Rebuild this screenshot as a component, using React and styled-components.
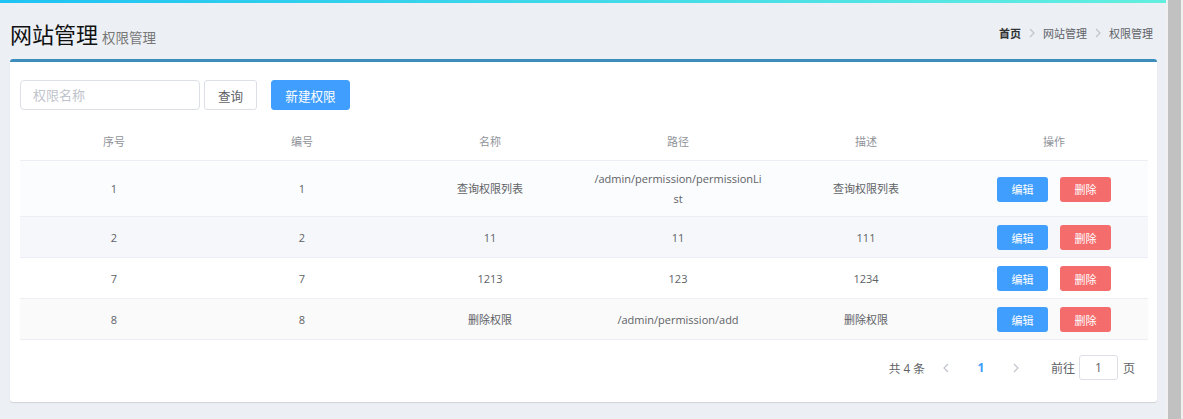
import styled, { createGlobalStyle } from "styled-components";

const rows = [
    { no: 1, id: 1, name: "查询权限列表", path: "/admin/permission/permissionList", desc: "查询权限列表", bg: "#fbfcfe" },
    { no: 2, id: 2, name: "11", path: "11", desc: "111", bg: "#f5f7fa" },
    { no: 7, id: 7, name: "1213", path: "123", desc: "1234", bg: "#fff" },
    { no: 8, id: 8, name: "删除权限", path: "/admin/permission/add", desc: "删除权限", bg: "#fafafa" },
];

const Chevron = ({ dir = "right", color = "#c0c4cc", w = 6, h = 10 }) => (
    <svg width={w} height={h} viewBox="0 0 6 10" fill="none">
        {dir === "right" ? (
            <polyline points="1,1 5,5 1,9" stroke={color} strokeWidth="1.2" />
        ) : (
            <polyline points="5,1 1,5 5,9" stroke={color} strokeWidth="1.2" />
        )}
    </svg>
);

export default function App() {
    return (
        <PageSC>
            <GlobalStyle />
            <MainSC>
                <StripeSC />
                <HeaderSC>
                    <TitleSC>
                        网站管理<SmallSC>权限管理</SmallSC>
                    </TitleSC>
                    <CrumbsSC>
                        <CrumbSC $strong>首页</CrumbSC>
                        <SepSC><Chevron /></SepSC>
                        <CrumbSC>网站管理</CrumbSC>
                        <SepSC><Chevron /></SepSC>
                        <CrumbSC>权限管理</CrumbSC>
                    </CrumbsSC>
                </HeaderSC>
                <BoxSC>
                    <ToolbarSC>
                        <InputSC placeholder="权限名称" />
                        <ButtonSC>查询</ButtonSC>
                        <ButtonSC $primary $wide>新建权限</ButtonSC>
                    </ToolbarSC>
                    <TableSC>
                        <thead>
                            <tr>
                                <ThSC>序号</ThSC>
                                <ThSC>编号</ThSC>
                                <ThSC>名称</ThSC>
                                <ThSC>路径</ThSC>
                                <ThSC>描述</ThSC>
                                <ThSC>操作</ThSC>
                            </tr>
                        </thead>
                        <tbody>
                            {rows.map((r) => (
                                <TrSC key={r.no} $bg={r.bg}>
                                    <TdSC>{r.no}</TdSC>
                                    <TdSC>{r.id}</TdSC>
                                    <TdSC>{r.name}</TdSC>
                                    <TdSC>{r.path}</TdSC>
                                    <TdSC>{r.desc}</TdSC>
                                    <TdSC>
                                        <OpsSC>
                                            <SmallBtnSC $color="#409eff">编辑</SmallBtnSC>
                                            <SmallBtnSC $color="#f56c6c">删除</SmallBtnSC>
                                        </OpsSC>
                                    </TdSC>
                                </TrSC>
                            ))}
                        </tbody>
                    </TableSC>
                    <PagerSC>
                        <TotalSC>共 4 条</TotalSC>
                        <PageBtnSC><Chevron dir="left" w={6} h={10} /></PageBtnSC>
                        <PageBtnSC $active>1</PageBtnSC>
                        <PageBtnSC><Chevron w={6} h={10} /></PageBtnSC>
                        <JumpSC>
                            前往
                            <JumpInputSC defaultValue="1" />
                            页
                        </JumpSC>
                    </PagerSC>
                </BoxSC>
            </MainSC>
            <ScrollTrackSC>
                <ScrollThumbSC />
            </ScrollTrackSC>
        </PageSC>
    );
}

const GlobalStyle = createGlobalStyle`
    body {
        margin: 0;
        background: #ecf0f5;
        overflow: hidden;
        font-family: "Open Sans", "Noto Sans CJK SC", sans-serif;
    }
`;

const PageSC = styled.div`
    display: flex;
    width: 1183px;
    height: 419px;
    background: #ecf0f5;
`;

const MainSC = styled.div`
    flex: 1;
    display: flex;
    flex-direction: column;
`;

const StripeSC = styled.div`
    height: 3px;
    background: linear-gradient(to right, #1fc3f3, #62efdf);
`;

const HeaderSC = styled.div`
    height: 56px;
    box-sizing: border-box;
    padding: 3px 13px 0 10px;
    display: flex;
    align-items: center;
    justify-content: space-between;
`;

const TitleSC = styled.h1`
    margin: 0;
    font-size: 22px;
    font-weight: 400;
    color: #111;
    display: flex;
    align-items: baseline;
`;

const SmallSC = styled.small`
    font-size: 13.5px;
    color: #777;
    padding-left: 4px;
`;

const CrumbsSC = styled.div`
    display: flex;
    align-items: center;
    font-size: 11px;
`;

const CrumbSC = styled.span`
    color: ${(p) => (p.$strong ? "#303133" : "#606266")};
    font-weight: ${(p) => (p.$strong ? 700 : 400)};
`;

const SepSC = styled.span`
    display: flex;
    margin: 0 8px;
`;

const BoxSC = styled.div`
    margin: 0 9px 0 10px;
    background: #fff;
    border-top: 3px solid #3c8dbc;
    border-radius: 3px;
    box-shadow: 0 1px 1px rgba(0, 0, 0, 0.12);
    padding: 18px 9px 22px 10px;
`;

const ToolbarSC = styled.div`
    display: flex;
    align-items: center;
    height: 30px;
    margin-bottom: 10px;
`;

const InputSC = styled.input`
    width: 180px;
    height: 30px;
    box-sizing: border-box;
    border: 1px solid #dcdfe6;
    border-radius: 4px;
    padding: 0 12px;
    font-family: inherit;
    font-size: 13px;
    color: #606266;
    outline: none;
    &::placeholder {
        color: #c0c4cc;
    }
`;

const ButtonSC = styled.button`
    height: 30px;
    width: ${(p) => (p.$wide ? "79px" : "53px")};
    margin-left: ${(p) => (p.$primary ? "14px" : "4px")};
    box-sizing: border-box;
    border: 1px solid ${(p) => (p.$primary ? "#409eff" : "#dcdfe6")};
    background: ${(p) => (p.$primary ? "#409eff" : "#fff")};
    color: ${(p) => (p.$primary ? "#fff" : "#606266")};
    border-radius: 3px;
    font-family: inherit;
    font-size: 12.6px;
    padding: 0;
`;

const TableSC = styled.table`
    width: 100%;
    table-layout: fixed;
    border-collapse: collapse;
    font-size: 11px;
`;

const ThSC = styled.th`
    padding: 12px 9px 8px;
    line-height: 20px;
    font-weight: 400;
    color: #909399;
    text-align: center;
    border-bottom: 1px solid #ebeef5;
`;

const TrSC = styled.tr`
    background: ${(p) => p.$bg};
`;

const TdSC = styled.td`
    padding: 8px 9px 7px;
    line-height: 20px;
    color: #606266;
    text-align: center;
    vertical-align: middle;
    word-break: break-all;
    border-bottom: 1px solid #ebeef5;
`;

const OpsSC = styled.div`
    display: flex;
    justify-content: center;
    gap: 12px;
`;

const SmallBtnSC = styled.button`
    width: 51px;
    height: 25px;
    border: none;
    border-radius: 3px;
    background: ${(p) => p.$color};
    color: #fff;
    font-family: inherit;
    font-size: 11px;
    padding: 0;
`;

const PagerSC = styled.div`
    display: flex;
    justify-content: flex-end;
    align-items: center;
    height: 25px;
    margin-top: 15px;
    padding-right: 13px;
    font-size: 11.7px;
    color: #606266;
`;

const TotalSC = styled.span`
    margin-right: 5px;
`;

const PageBtnSC = styled.span`
    width: 32px;
    height: 25px;
    margin: 0 ${(p) => (p.$active ? "3px" : "0")};
    display: flex;
    align-items: center;
    justify-content: center;
    font-weight: 700;
    font-size: 12px;
    color: ${(p) => (p.$active ? "#409eff" : "#c0c4cc")};
`;

const JumpSC = styled.span`
    margin-left: 19px;
    display: flex;
    align-items: center;
    gap: 4px;
    font-size: 12px;
`;

const JumpInputSC = styled.input`
    width: 39px;
    height: 25px;
    box-sizing: border-box;
    border: 1px solid #dcdfe6;
    border-radius: 3px;
    text-align: center;
    font-family: inherit;
    font-size: 12px;
    color: #606266;
    margin-right: 1px;
    outline: none;
`;

const ScrollTrackSC = styled.div`
    width: 17px;
    background: #f1f1f1;
    display: flex;
    justify-content: center;
`;

const ScrollThumbSC = styled.div`
    width: 13px;
    background: #c1c1c1;
`;
